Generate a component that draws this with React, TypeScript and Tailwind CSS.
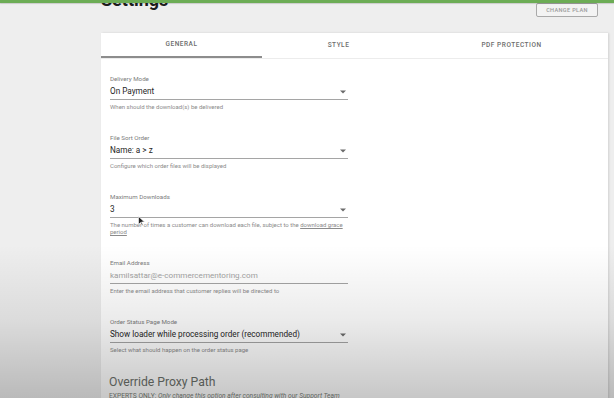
import React from "react";

type Field = {
  label: string;
  value: string;
  help: React.ReactNode;
  select?: boolean;
  muted?: boolean;
};

const fields: Field[] = [
  {
    label: "Delivery Mode",
    value: "On Payment",
    help: "When should the download(s) be delivered",
    select: true,
  },
  {
    label: "File Sort Order",
    value: "Name: a > z",
    help: "Configure which order files will be displayed",
    select: true,
  },
  {
    label: "Maximum Downloads",
    value: "3",
    help: (
      <>
        The number of times a customer can download each file, subject to the{" "}
        <span className="underline">download grace</span>
        <br />
        <span className="underline">period</span>
      </>
    ),
    select: true,
  },
  {
    label: "Email Address",
    value: "kamilsattar@e-commercementoring.com",
    help: "Enter the email address that customer replies will be directed to",
    muted: true,
  },
  {
    label: "Order Status Page Mode",
    value: "Show loader while processing order (recommended)",
    help: "Select what should happen on the order status page",
    select: true,
  },
];

const tabs = ["GENERAL", "STYLE", "PDF PROTECTION"];

// petit triangle des menus déroulants
const Caret = () => (
  <svg width="6" height="4" viewBox="0 0 6 4" className="mr-[2px]">
    <path d="M0 0.5h6L3 3.5z" fill="#6b6b6b" />
  </svg>
);

const FieldRow = ({ field }: { field: Field }) => (
  <div className="w-[238px]">
    <div className="h-[9px] text-[6.2px] leading-[9px] text-[#7c7c7c]">
      {field.label}
    </div>
    <div className="h-[16px] flex items-center justify-between border-b border-[#a5a5a5]">
      <span
        className={
          field.muted
            ? "text-[8.1px] text-[#a3a3a3]"
            : "text-[8.2px] text-[#262626]"
        }
      >
        {field.value}
      </span>
      {field.select && <Caret />}
    </div>
    <div className="mt-[3px] text-[6px] leading-[7px] text-[#8b8b8b]">
      {field.help}
    </div>
  </div>
);

export default function App() {
  return (
    <div className="relative w-[614px] h-[398px] overflow-hidden bg-[#eeeeee] font-['Roboto',sans-serif]">
      {/* -- HEADER -- */}
      <div className="pl-[101px]">
        <div className="w-[497px] h-[33px] flex justify-between items-start">
          <h1 className="-mt-[9px] text-[18px] leading-[18px] font-bold text-[#1e1e1e]">
            Settings
          </h1>
          <button className="mt-[3px] h-[14px] w-[62px] border border-[#a9a9a9] rounded-[2px] text-[5.6px] tracking-[0.06em] font-medium text-[#9a9a9a] bg-[#f3f3f3]">
            CHANGE PLAN
          </button>
        </div>

        {/* -- CARD -- */}
        <div className="w-[507px] h-[400px] bg-white shadow-[1px_0_2px_rgba(0,0,0,0.12)]">
          <div className="grid grid-cols-[161px_153px_1fr] h-[26px] border-b border-[#ececec]">
            {tabs.map((tab, i) => (
              <div
                key={tab}
                className={
                  i === 0
                    ? "flex items-center justify-center border-b-2 border-[#8d8d8d] text-[6.5px] tracking-[0.08em] font-medium text-[#6c6c6c]"
                    : "flex items-center justify-center text-[6.5px] tracking-[0.08em] font-medium text-[#6c6c6c]"
                }
              >
                {tab}
              </div>
            ))}
          </div>

          <div className="pl-[9px] pt-[16px] flex flex-col gap-[24px]">
            {fields.map((f) => (
              <FieldRow key={f.label} field={f} />
            ))}
          </div>

          <div className="pl-[8px] pt-[21px]">
            <h2 className="text-[12.2px] leading-[16px] text-[#6c716b]">
              Override Proxy Path
            </h2>
            <p className="mt-[2px] text-[6.7px] leading-[8px] text-[#7a7f79]">
              EXPERTS ONLY: <i>Only change this option after consulting with our Support Team</i>
            </p>
          </div>
        </div>
      </div>

      {/* barre verte du haut */}
      <div className="absolute top-0 left-0 right-0 h-[3px] bg-[#6cac55] shadow-[0_1px_1px_rgba(0,0,0,0.15)]" />

      {/* curseur de souris */}
      <svg
        className="absolute left-[138px] top-[216px]"
        width="7"
        height="10"
        viewBox="0 0 7 10"
      >
        <path d="M0.5 0.5v8l2-2 1.5 3 1-0.5-1.5-3h3z" fill="#222" stroke="#fff" strokeWidth="0.6" />
      </svg>

      {/* assombrissement du bas (capture vidéo) */}
      <div className="absolute inset-0 pointer-events-none bg-[linear-gradient(to_bottom,rgba(0,0,0,0)_0px,rgba(0,0,0,0)_245px,rgba(0,0,0,0.08)_320px,rgba(0,0,0,0.22)_398px)]" />
    </div>
  );
}
